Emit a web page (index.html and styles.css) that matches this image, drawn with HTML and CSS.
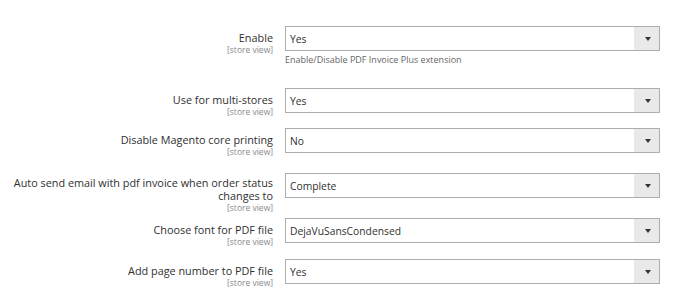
FILE: index.html
```html
<!DOCTYPE html>
<html>
<head>
<meta charset="utf-8">
<link rel="stylesheet" href="styles.css">
</head>
<body>
<div class="form">
  <div class="row row-first">
    <div class="label"><span class="title">Enable</span><span class="scope">[store view]</span></div>
    <div class="control">
      <div class="select"><span class="value">Yes</span><span class="arrow"></span></div>
      <div class="note">Enable/Disable PDF Invoice Plus extension</div>
    </div>
  </div>
  <div class="row row-2">
    <div class="label"><span class="title">Use for multi-stores</span><span class="scope">[store view]</span></div>
    <div class="control"><div class="select"><span class="value">Yes</span><span class="arrow"></span></div></div>
  </div>
  <div class="row row-3">
    <div class="label"><span class="title">Disable Magento core printing</span><span class="scope">[store view]</span></div>
    <div class="control"><div class="select"><span class="value">No</span><span class="arrow"></span></div></div>
  </div>
  <div class="row row-4">
    <div class="label label-tight"><span class="title">Auto send email with pdf invoice when order status changes to</span><span class="scope">[store view]</span></div>
    <div class="control"><div class="select"><span class="value">Complete</span><span class="arrow"></span></div></div>
  </div>
  <div class="row row-5">
    <div class="label"><span class="title">Choose font for PDF file</span><span class="scope">[store view]</span></div>
    <div class="control"><div class="select"><span class="value">DejaVuSansCondensed</span><span class="arrow"></span></div></div>
  </div>
  <div class="row row-6">
    <div class="label"><span class="title">Add page number to PDF file</span><span class="scope">[store view]</span></div>
    <div class="control"><div class="select"><span class="value">Yes</span><span class="arrow"></span></div></div>
  </div>
</div>
</body>
</html>
```
FILE: styles.css
```css
html, body {
  margin: 0;
  padding: 0;
  background: #ffffff;
}
body {
  font-family: "Open Sans", "Noto Sans", sans-serif;
  color: #303030;
}
.form {
  display: flex;
  flex-direction: column;
  padding: 26px 0 0 8px;
}
.row {
  display: grid;
  grid-template-columns: 265px 375px;
  column-gap: 12px;
  align-items: start;
}
.row-2 { margin-top: 22px; }
.row-3 { margin-top: 10px; }
.row-4 { margin-top: 15px; }
.row-5 { margin-top: 4px; }
.row-6 { margin-top: 11px; }
.label {
  display: flex;
  flex-direction: column;
  align-items: flex-end;
  text-align: right;
  padding-top: 5px;
}
.label-tight {
  padding-top: 3px;
}
.title {
  font-size: 10.85px;
  line-height: 13px;
  color: #303030;
}
.scope {
  font-size: 8.5px;
  line-height: 12px;
  color: #8a8a8a;
}
.select {
  display: flex;
  height: 23px;
  border: 1px solid #adadad;
  box-sizing: content-box;
  align-items: stretch;
}
.value {
  flex: 1;
  display: flex;
  align-items: center;
  padding-left: 4px;
  font-size: 10.3px;
  color: #303030;
}
.arrow {
  width: 25px;
  background: #e9e9e9;
  display: flex;
  align-items: center;
  justify-content: center;
}
.arrow::after {
  content: "";
  width: 0;
  height: 0;
  border-left: 3px solid transparent;
  border-right: 3px solid transparent;
  border-top: 4px solid #333333;
  margin-left: 2px;
  margin-top: 1px;
}
.note {
  margin-top: 2px;
  font-size: 9px;
  line-height: 13px;
  color: #666666;
}
```
